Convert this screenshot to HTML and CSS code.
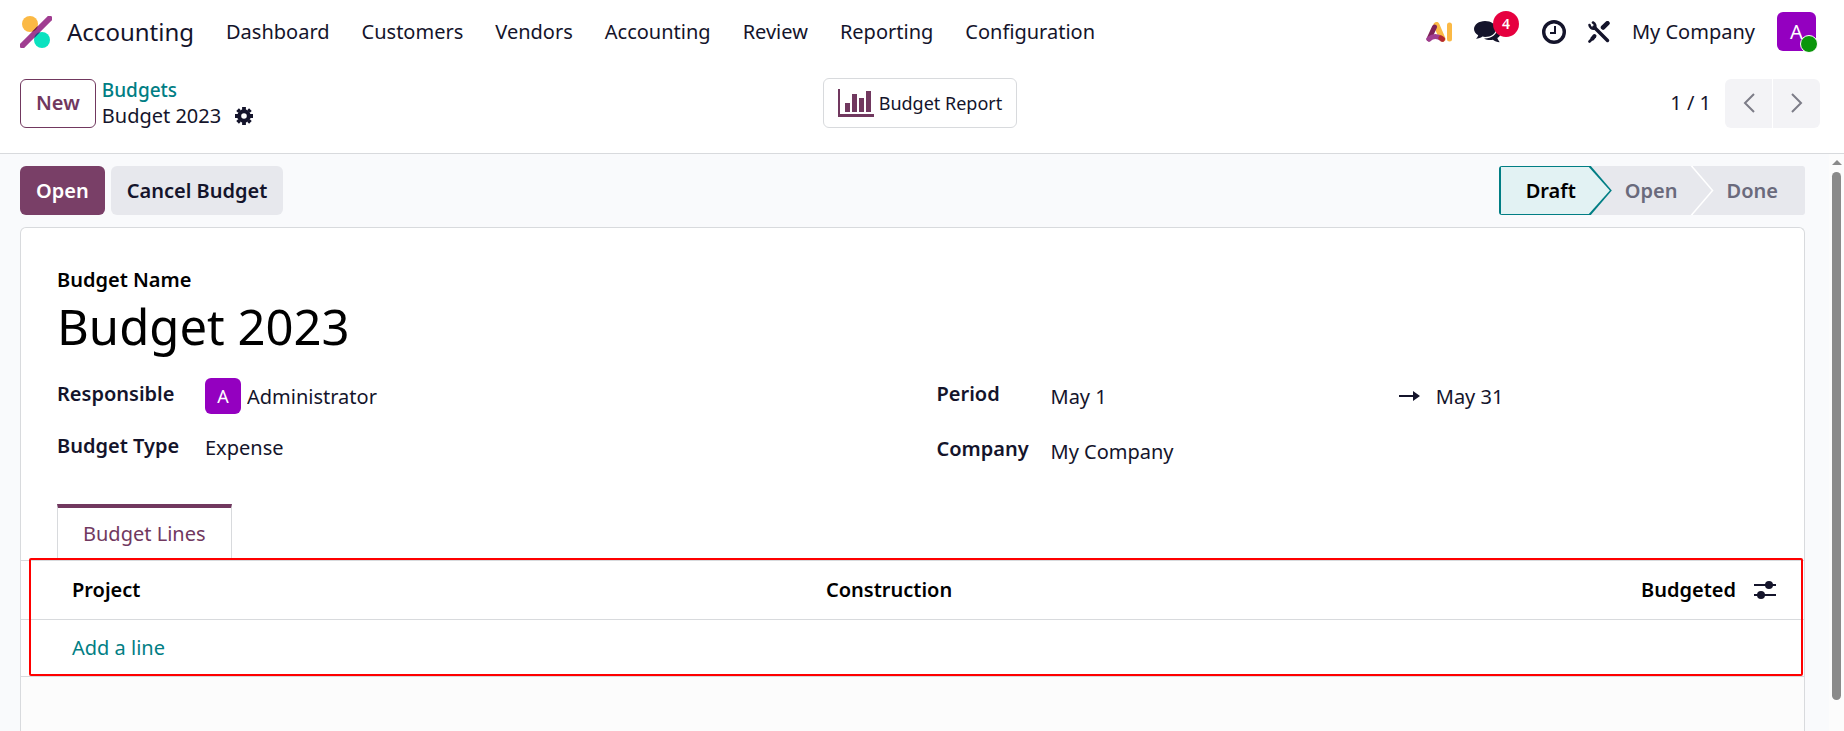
FILE: index.html
```html
<!DOCTYPE html>
<html lang="en">
<head>
    <meta charset="UTF-8">
    <meta name="viewport" content="width=device-width, initial-scale=1.0">
    <title>Budget 2023</title>
    <link rel="stylesheet" href="styles.css">
</head>
<body>
    <header class="navbar">
        <svg class="logo" viewBox="0 0 32 32" width="32" height="32">
            <circle cx="10" cy="8" r="8" fill="#fbb945"/>
            <circle cx="22" cy="24" r="8" fill="#0be2c0"/>
            <path d="M2.500 29.500 29.500 2.500" stroke="#a03d91" stroke-width="6" stroke-linecap="round"/>
            <path d="M11.800 15.900 17.900 9.800A8 8 0 0 1 11.800 15.900z" fill="#72263b"/>
            <path d="M14.100 22.200 20.200 16.100A8 8 0 0 0 14.100 22.200z" fill="#1f4f87"/>
        </svg>
        <a class="brand" href="#">Accounting</a>
        <nav class="menu">
            <a href="#">Dashboard</a>
            <a href="#">Customers</a>
            <a href="#">Vendors</a>
            <a href="#">Accounting</a>
            <a href="#">Review</a>
            <a href="#">Reporting</a>
            <a href="#">Configuration</a>
        </nav>
        <div class="systray">
            <button class="icon-btn" aria-label="AI">
                <svg viewBox="0 0 26 20" width="26" height="20" fill="none" stroke-width="5" stroke-linecap="round" stroke-linejoin="round">
                    <path d="M10.500 3 16.500 17" stroke="#fbb945" stroke-width="6"/>
                    <path d="M23.500 3V17" stroke="#fbb945"/>
                    <path d="M8.500 5 3 17" stroke="#7d2257"/>
                    <path d="M3 17Q9 12 16 17" stroke="#a03d91"/>
                    <path d="M15 16 16.500 17" stroke="#b5282f"/>
                </svg>
            </button>
            <button class="icon-btn chat" aria-label="Messages">
                <svg viewBox="0 0 28 22" width="28" height="22" fill="#14142b">
                    <path d="M11 0C5 0 0 3.600 0 8c0 2.500 1.600 4.700 4.200 6.200-.4 1.500-1.200 2.500-2.200 3.600 2.600 0 4.700-.9 6.400-2.200.9.200 1.700.3 2.600.3 6 0 11-3.500 11-8S17 0 11 0z"/>
                    <path d="M24 6c2 1.400 3 3.200 3 5.200 0 2.400-1.400 4.400-3.700 5.900.4 1.500 1.300 2.700 2.400 4.100-2.700-.2-4.900-1-6.800-2.500-3.100.6-6.400.1-8.900-1.300C17.500 17.600 23.500 13.500 24 6z"/>
                </svg>
                <span class="badge">4</span>
            </button>
            <button class="icon-btn" aria-label="Activities">
                <svg viewBox="0 0 24 24" width="24" height="24" fill="none" stroke="#14142b">
                    <circle cx="12" cy="12" r="10.300" stroke-width="3.400"/>
                    <path d="M13 6V13H8" stroke-width="2"/>
                </svg>
            </button>
            <button class="icon-btn" aria-label="Tools">
                <svg viewBox="0 0 22 22" width="22" height="22" fill="none" stroke="#14142b" stroke-linecap="round">
                    <path d="M6 6 19.500 19.500" stroke-width="3.500"/>
                    <path d="M1.500 4A4 4 0 0 0 6.500 7.500 4 4 0 0 0 5 1.500" stroke-width="2.600"/>
                    <path d="M15 6.500 19.500 2.200" stroke-width="4.500"/>
                    <path d="M6.500 15 4.500 17.500" stroke-width="4"/>
                    <path d="M4 18 1.500 20.500" stroke-width="2.600"/>
                </svg>
            </button>
            <a class="company" href="#">My Company</a>
            <button class="avatar user" aria-label="User menu">A<span class="status-dot"></span></button>
        </div>
    </header>

    <div class="control-panel">
        <div class="cp-left">
            <button class="btn btn-outline">New</button>
            <div class="breadcrumb">
                <a href="#">Budgets</a>
                <div class="current">
                    <span>Budget 2023</span>
                    <button class="icon-btn" aria-label="Actions">
                        <svg viewBox="0 0 18 18" width="18" height="18" fill="none" stroke="#14142b">
                            <circle cx="9" cy="9" r="4.800" stroke-width="4"/>
                            <path d="M9 0V3M9 15v3M0 9H3M15 9h3M2.600 2.600 4.500 4.500M13.500 13.500l1.900 1.900M2.600 15.400l1.900-1.900M13.500 4.500l1.900-1.900" stroke-width="3.800"/>
                        </svg>
                    </button>
                </div>
            </div>
        </div>
        <button class="report-btn">
            <svg viewBox="0 0 36 28" width="36" height="28" fill="#71385f">
                <path d="M0 0h2v25h34v3H0zM7 14h5v9H7zM14 5h5v18h-5zM21 9h5v14h-5zM28 2h5v21h-5z"/>
            </svg>
            Budget Report
        </button>
        <div class="pager">
            <span>1 / 1</span>
            <div class="pager-buttons">
                <button aria-label="Previous">
                    <svg viewBox="0 0 12 20" width="12" height="20"><path d="M11 1 2 10l9 9"/></svg>
                </button>
                <button aria-label="Next">
                    <svg viewBox="0 0 12 20" width="12" height="20"><path d="m1 1 9 9-9 9"/></svg>
                </button>
            </div>
        </div>
    </div>

    <div class="content">
        <main class="form-view">
            <div class="statusbar">
                <div class="actions">
                    <button class="btn btn-primary">Open</button>
                    <button class="btn btn-secondary">Cancel Budget</button>
                </div>
                <div class="steps">
                    <button class="step active"><span>Draft</span></button>
                    <button class="step"><span>Open</span></button>
                    <button class="step"><span>Done</span></button>
                </div>
            </div>

            <form class="sheet">
                <div class="title">
                    <label for="name">Budget Name</label>
                    <input type="text" id="name" value="Budget 2023">
                </div>
                <div class="groups">
                    <div class="group">
                        <div class="field">
                            <label for="responsible">Responsible</label>
                            <div class="value">
                                <span class="avatar small">A</span>
                                <input type="text" id="responsible" value="Administrator">
                            </div>
                        </div>
                        <div class="field">
                            <label for="type">Budget Type</label>
                            <div class="value">
                                <select id="type">
                                    <option>Expense</option>
                                </select>
                            </div>
                        </div>
                    </div>
                    <div class="group group-right">
                        <div class="field">
                            <label for="date-from">Period</label>
                            <div class="value dates">
                                <input type="text" id="date-from" value="May 1">
                                <svg viewBox="0 0 21 10" width="21" height="10" fill="#14142b"><path d="M0 4h14V0l7 5-7 5V6H0z"/></svg>
                                <input type="text" id="date-to" aria-label="Period end" value="May 31">
                            </div>
                        </div>
                        <div class="field">
                            <label for="company">Company</label>
                            <div class="value">
                                <input type="text" id="company" value="My Company">
                            </div>
                        </div>
                    </div>
                </div>

                <div class="tabs">
                    <button type="button" class="tab">Budget Lines</button>
                </div>
                <div class="lines">
                    <table>
                        <thead>
                            <tr>
                                <th class="col-project">Project</th>
                                <th>Construction</th>
                                <th class="col-amount">Budgeted</th>
                                <th class="col-options">
                                    <button type="button" class="icon-btn" aria-label="Optional columns">
                                        <svg viewBox="0 0 22 20" width="22" height="20" fill="#14142b">
                                            <path d="M0 4h22v2H0zM0 14h22v2H0z"/>
                                            <circle cx="15" cy="5" r="4"/>
                                            <circle cx="7" cy="15" r="4"/>
                                        </svg>
                                    </button>
                                </th>
                            </tr>
                        </thead>
                        <tbody>
                            <tr>
                                <td class="col-project" colspan="4"><a href="#">Add a line</a></td>
                            </tr>
                        </tbody>
                    </table>
                    <div class="highlight"></div>
                </div>
                <div class="sheet-footer"></div>
            </form>
        </main>
        <div class="scrollbar">
            <div class="scroll-arrow"></div>
            <div class="scroll-thumb"></div>
        </div>
    </div>
</body>
</html>
```

FILE: styles.css
```css
* {
    box-sizing: border-box;
}

body {
    margin: 0;
    height: 100vh;
    display: flex;
    flex-direction: column;
    overflow: hidden;
    font-family: "Noto Sans", sans-serif;
    font-size: 20px;
    line-height: 26px;
    color: #14142b;
    background: #fff;
}

button, input, select {
    font: inherit;
    color: inherit;
    border: 0;
    margin: 0;
    padding: 0;
    background: none;
}

input, select {
    flex: 1;
    min-width: 0;
    height: 36px;
    appearance: none;
}

a {
    color: inherit;
    text-decoration: none;
}

svg {
    display: block;
    flex: none;
}

/* top bar */
.navbar {
    display: flex;
    align-items: center;
    height: 63px;
    padding: 0 28px 0 20px;
}

.brand {
    margin: 0 32px 0 15px;
    font-size: 24px;
}

.menu {
    display: flex;
    gap: 32px;
}

.systray {
    display: flex;
    align-items: center;
    gap: 22px;
    margin-left: auto;
}

.icon-btn {
    display: block;
}

.chat {
    position: relative;
    margin-right: 18px;
}

.badge {
    position: absolute;
    top: -10px;
    left: 19px;
    width: 26px;
    height: 26px;
    border-radius: 13px;
    background: #e6003f;
    color: #fff;
    font-size: 14px;
    font-weight: 600;
    line-height: 25px;
}

.avatar {
    position: relative;
    flex: none;
    width: 39px;
    height: 39px;
    border-radius: 6px;
    background: #9400c0;
    color: #fff;
    text-align: center;
}

.small {
    width: 36px;
    height: 36px;
    margin-right: 6px;
    font-size: 18px;
    line-height: 36px;
}

.status-dot {
    position: absolute;
    right: -2px;
    bottom: -2px;
    width: 18px;
    height: 18px;
    border: 1px solid #fff;
    border-radius: 50%;
    background: #0a950a;
}

/* control panel */
.control-panel {
    display: grid;
    grid-template-columns: 1fr auto 1fr;
    align-items: center;
    height: 91px;
    padding: 0 24px 10px 20px;
    border-bottom: 1px solid #d8dadd;
}

.cp-left {
    display: flex;
    align-items: center;
    gap: 6px;
}

.btn {
    height: 49px;
    padding: 0 16px;
    border-radius: 6px;
    font-weight: 600;
}

.btn-outline {
    padding: 0 15px;
    border: 1px solid #71385f;
    color: #71385f;
}

.btn-primary {
    background: #793f67;
    color: #fff;
}

.btn-secondary {
    background: #e7e8ed;
}

.breadcrumb a {
    font-size: 19px;
    font-weight: 500;
    color: #017e84;
}

.current {
    display: flex;
    align-items: center;
    gap: 14px;
}

.report-btn {
    display: flex;
    align-items: center;
    gap: 5px;
    height: 50px;
    padding: 0 14px;
    border: 1px solid #d8dadd;
    border-radius: 6px;
    font-size: 18px;
}

.pager {
    display: flex;
    align-items: center;
    justify-content: flex-end;
    gap: 14px;
}

.pager-buttons {
    display: flex;
    gap: 1px;
    border-radius: 6px;
    overflow: hidden;
}

.pager-buttons button {
    display: flex;
    align-items: center;
    justify-content: center;
    width: 47px;
    height: 49px;
    background: #f3f3f6;
}

.pager-buttons path {
    fill: none;
    stroke: #7c7c88;
    stroke-width: 2;
}

/* form */
.content {
    flex: 1;
    min-height: 0;
    display: flex;
    background: #f9fafc;
}

.form-view {
    flex: 1;
    display: flex;
    flex-direction: column;
    padding: 12px 24px 0 20px;
}

.statusbar {
    display: flex;
    justify-content: space-between;
    margin-bottom: 12px;
}

.actions {
    display: flex;
    gap: 6px;
}

.steps {
    display: flex;
    border-radius: 3px;
    overflow: hidden;
}

.step {
    position: relative;
    height: 49px;
    margin-right: -21px;
    padding: 0 36px 0 34px;
    background: #fff;
    color: #6a6a7c;
    font-weight: 600;
    clip-path: polygon(0 0, calc(100% - 21px) 0, 100% 50%, calc(100% - 21px) 100%, 0 100%);
}

.step::before {
    content: "";
    position: absolute;
    inset: 0 2px 0 0;
    background: #e7e8ed;
    clip-path: inherit;
}

.step span {
    position: relative;
}

.step:nth-child(1) {
    z-index: 2;
    padding-left: 27px;
}

.step:nth-child(2) {
    z-index: 1;
}

.step:last-child {
    margin-right: 0;
    padding-right: 27px;
    background: #e7e8ed;
    clip-path: none;
}

.step.active {
    background: #017e84;
    color: #000;
}

.step.active::before {
    inset: 1px 2px 1px 2px;
    background: #e2f2f3;
}

.sheet {
    flex: 1;
    display: flex;
    flex-direction: column;
    border: 1px solid #d8dadd;
    border-bottom: 0;
    border-radius: 6px 6px 0 0;
    background: #fff;
}

.sheet label {
    font-weight: 600;
}

.title {
    display: flex;
    flex-direction: column;
    padding: 38px 36px 20px;
    color: #000;
}

.title label {
    line-height: 28px;
}

.title input {
    flex: none;
    height: 64px;
    font-size: 49px;
}

.groups {
    display: grid;
    grid-template-columns: 1fr 1fr;
    gap: 48px;
    padding: 0 36px 35px;
}

.group {
    display: flex;
    flex-direction: column;
    gap: 16px;
}

.group-right {
    gap: 19px;
}

.field {
    display: grid;
    grid-template-columns: 148px 1fr;
}

.group-right .field {
    grid-template-columns: 114px 1fr;
}

.field label {
    line-height: 32px;
}

.value {
    display: flex;
    align-items: center;
}

.dates {
    gap: 16px;
}

.tabs {
    padding-left: 36px;
}

.tab {
    display: block;
    height: 56px;
    padding: 0 25px;
    border: 1px solid #d8dadd;
    border-top: 4px solid #71385f;
    border-bottom: 0;
    color: #71385f;
}

.lines {
    position: relative;
}

table {
    width: 100%;
    border-collapse: collapse;
}

th, td {
    padding: 0 8px;
    border-top: 1px solid #d8dadd;
    border-bottom: 1px solid #d8dadd;
    text-align: left;
}

th {
    height: 59px;
    font-weight: 600;
    color: #000;
}

td {
    height: 57px;
}

td a {
    color: #017e84;
}

.col-project {
    width: 44.7%;
    padding-left: 51px;
}

.col-amount {
    text-align: right;
}

.col-options {
    width: 60px;
    padding-left: 10px;
}

/* frame round the budget lines */
.highlight {
    position: absolute;
    inset: -2px 1px 1px 8px;
    border: 2px solid #f00;
    border-radius: 2px;
    pointer-events: none;
}

.sheet-footer {
    flex: 1;
    background: #fcfcfc;
}

.scrollbar {
    display: flex;
    flex-direction: column;
    align-items: center;
    width: 15px;
    padding: 6px 0 31px;
    background: #fcfcfc;
}

.scroll-arrow {
    margin-bottom: 7px;
    border: 5px solid transparent;
    border-top: 0;
    border-bottom-color: #8a8a8a;
}

.scroll-thumb {
    flex: 1;
    width: 9px;
    border-radius: 5px;
    background: #8a8a8a;
}
```
